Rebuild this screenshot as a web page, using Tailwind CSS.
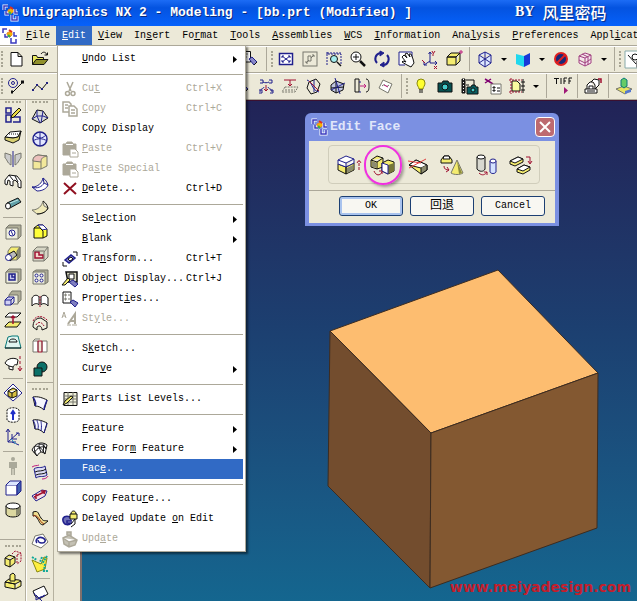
<!DOCTYPE html>
<html lang="en">

<head>
    <meta charset="utf-8" />
    <meta name="viewport" content="width=device-width, initial-scale=1" />
    <title>Unigraphics NX 2 - Modeling</title>
    <script src="https://cdn.jsdelivr.net/npm/@tailwindcss/browser@4"></script>
</head>

<body class="h-screen overflow-hidden flex flex-col bg-[#ece9d8] text-black text-[10px] leading-5 font-['Liberation_Mono','Noto_Sans_CJK_SC',monospace]">
    <header class="relative h-[26px] shrink-0 flex items-center bg-linear-to-b from-[#1c6cf5] via-[#0453e0] via-30% to-[#0661fb] text-white whitespace-nowrap">
        <span data-icon="logo" class="w-[22px] flex justify-center"></span>
        <h1 class="text-[13px] font-bold text-shadow-[1px_1px_0_#0a2a80]">Unigraphics NX 2 - Modeling - [bb.prt (Modified) ]</h1>
        <div class="absolute left-[515px] top-0 flex items-center gap-3 leading-6 font-bold text-shadow-[1px_1px_1px_#0a2a80]">
            <span class="text-[14px] font-['Liberation_Serif',serif]">BY</span>
            <span class="text-base leading-5 -ml-1 font-['Noto_Sans_CJK_SC',sans-serif] font-medium">风里密码</span>
        </div>
    </header>

    <nav class="h-[19px] shrink-0 flex items-stretch whitespace-nowrap leading-[19px]">
        <span data-icon="logo" class="w-5 flex items-center justify-center bg-white"></span>
        <button class="px-[6px]"><u>F</u>ile</button>
        <div class="relative z-10">
            <button class="h-full px-[6px] bg-[#316ac5] text-white"><u>E</u>dit</button>
            <div id="edit-menu" class="absolute left-px top-full w-[189px] bg-white border border-[#aca899] px-[2px] pt-[3px] pb-[2px] shadow-[2px_2px_2px_#00000080] leading-5"></div>
        </div>
        <button class="px-[6px]"><u>V</u>iew</button>
        <button class="px-[6px]">In<u>s</u>ert</button>
        <button class="px-[6px]">Fo<u>r</u>mat</button>
        <button class="px-[6px]"><u>T</u>ools</button>
        <button class="px-[6px]"><u>A</u>ssemblies</button>
        <button class="px-[6px]"><u>W</u>CS</button>
        <button class="px-[6px]"><u>I</u>nformation</button>
        <button class="px-[6px]">Ana<u>l</u>ysis</button>
        <button class="px-[6px]"><u>P</u>references</button>
        <button class="px-[6px]">Appl<u>i</u>cation</button>
    </nav>

    <div id="bar1" class="h-[27px] shrink-0 flex items-center overflow-hidden border-t border-[#aca899] shadow-[inset_0_1px_0_#fff]"></div>
    <div id="bar2" class="h-[28px] shrink-0 flex items-center overflow-hidden border-y border-[#aca899] shadow-[inset_0_1px_0_#fff]"></div>

    <main class="flex-1 flex min-h-0">
        <div id="col1" class="w-[26px] shrink-0 flex flex-col items-center overflow-hidden border-r border-[#b5b19f]"></div>
        <div id="col2" class="w-[28px] shrink-0 flex flex-col items-center overflow-hidden border-x border-l-white border-r-[#b5b19f]"></div>
        <div class="w-7 shrink-0 border-r-2 border-[#80706c]"></div>

        <section class="relative flex-1 overflow-hidden bg-linear-to-b from-[#212357] via-[#1c3f70] via-45% to-[#14668f] border-t border-[#3c1030]">
            <svg class="absolute left-[245px] top-[168px] w-[272px] h-[320px]" viewBox="327 269 272 320" stroke="#3d2c20" stroke-linejoin="round">
                <path fill="#fdbd70" d="M330 331 498 270 598 373 431 433Z" />
                <path fill="#734d2e" d="M330 331 431 433 430 588 328 486Z" />
                <path fill="#835831" d="M431 433 598 373 597 528 430 588Z" />
            </svg>

            <div class="absolute left-[223px] top-[12px] w-[254px] rounded-t-md bg-[#7b90e2] px-1 pb-[3px]">
                <div class="h-7 flex items-center rounded-t-md text-[#e0e6fa]">
                    <span data-icon="logo" class="w-[21px] flex justify-center"></span>
                    <h2 class="flex-1 text-[13px] font-bold">Edit Face</h2>
                    <button aria-label="Close" class="size-5 rounded-sm border border-white bg-[#bd6a70] flex items-center justify-center">
                        <svg class="size-3" viewBox="0 0 12 12" stroke="#fff" stroke-width="2"><path d="M1 1 11 11M11 1 1 11" /></svg>
                    </button>
                </div>
                <div class="bg-[#ece9d8] pt-1 pb-[7px]">
                    <div class="pl-1">
                        <div id="face-tools" class="mx-auto w-[212px] h-[39px] flex items-center justify-between pl-1 pr-[2px] rounded border border-[#d0cdbb]"></div>
                    </div>
                    <hr class="mt-[6px] mb-[5px] border-[#aca899]" />
                    <div class="flex justify-center gap-[7px] pl-[24px] pr-[4px]">
                        <button class="flex-1 max-w-16 h-5 leading-4 bg-[#f8f7f2] border border-[#1c3f73] rounded-[3px] shadow-[inset_0_0_0_2px_#a9c3ee]">OK</button>
                        <button class="flex-1 max-w-16 h-5 leading-4 text-xs bg-[#f8f7f2] border border-[#1c3f73] rounded-[3px]">回退</button>
                        <button class="flex-1 max-w-16 h-5 leading-4 bg-[#f8f7f2] border border-[#1c3f73] rounded-[3px]">Cancel</button>
                    </div>
                </div>
            </div>

            <p class="absolute right-[6px] bottom-1 text-[14px] leading-5 font-bold text-[#c31e2c] font-['DejaVu_Sans',sans-serif]">www.meiyadesign.com</p>
        </section>
    </main>

    <script>
        const N = 'stroke="#20208c"', R = 'stroke="#a01030"', G = 'stroke="#77776c"', M = 'stroke="#c02080"', T = 'stroke="#087878"';
        const Y = 'fill="#f4ec70"', W = 'fill="#fff"', S = 'fill="#8c8c70"';

        // every drawing sits in a 20 x 20 box, black outline unless it says otherwise
        const icons = {
            logo: `<path fill="#f4b400" stroke="#e8862a" d="M7 7 11 5 13 8 10 11 7 10Z"/><path stroke="#fff" stroke-width="3" d="M3 7V3H7M5 8V11H8M11 12v5h5v-4M14 6v4h3"/><path stroke="#3a3ac0" stroke-width="1.500" d="M3 7V3H7M5 8V11H8M11 12v5h5v-4M14 6v4h3"/><path stroke="#e03020" stroke-width="2" d="M9 4 12 6"/><path stroke="#30b050" stroke-width="2" d="M8 9 10 11"/>`,
            new: `<path ${W} d="M5 3.500h7l4 4v9.500H5ZM12 3.500V7.500h4"/>`,
            open: `<path fill="#e8e860" d="M2.500 15.500V6.500h4l1 2h6v2"/><path fill="#90902c" d="M2.500 15.500 6 10.500h12l-4 5Z"/><path d="M11 5c2-3 5-2 6 1M14.500 6H17.500V3.500"/>`,
            find: `<path ${W} d="M0 2.500H9.500V13H0"/><path ${G} d="M2 5h5M2 8h4"/><path fill="#8888c8" ${N} d="m8 10 3-2 5 5-3 3Z"/><path d="m13 16 3-3"/>`,
            fit: `<rect x="3.500" y="4.500" width="13" height="11" ${W} ${N} stroke-width="1.500"/><path ${N} d="m6 7 8 6m0-6-8 6M6 9V7h2m4 0h2v2m0 2v2h-2m-4 0H6v-2"/>`,
            fitGray: `<rect x="3" y="3" width="14" height="14" ${G}/><path ${G} d="m6 14 3-3m2-2 3-3m-2 0h2v2M6 12v2h2M8 7h3v5H8Z"/>`,
            fitSel: `<path ${N} d="M3 16V5h14v11M3 5V3m0 1h14V3" stroke-dasharray="2 1"/><circle cx="10" cy="10" r="3.500" fill="#a5eeee"/><path stroke-width="1.500" d="m13 13 4 4"/>`,
            zoom: `<circle cx="8" cy="8" r="5" ${W}/><path d="M5 8h6M8 5v6"/><path stroke-width="2.500" d="m12 12 5 5"/>`,
            rotate: `<path ${N} stroke-width="2" d="M5 14A6 6 0 0 1 8 4M15 6A6 6 0 0 1 12 16"/><path fill="#20208c" ${N} d="M8 2v5l4-3ZM12 13v5l-4-2Z"/>`,
            pan: `<path ${W} ${N} d="M16 9V3H3v13h6"/><path ${W} d="m6 8 2-2 3 3-2-4 2-1 3 4-1-3 2 0 2 5 1 4-3 4-4-2-5-3 1-1 3 1Z"/>`,
            axes: `<path ${N} d="M10 3v11h7M10 12l-6 4M8.500 5 10 3l1.500 2M15 12l2 2-2 2M4 13v3h3"/><path ${R} d="m12 2 1 2m2-2-2 3v2M2 11l3 3M14 17l3 3m0-3-3 3"/>`,
            plainBox: `<path ${Y} d="M3 8h9v8H3ZM3 8l4-4h9l-4 4ZM16 4v8l-4 4"/><path ${M} d="M17 1v4M15 3h4"/>`,
            hexWire: `<path ${N} fill="#dde8ff" d="m10 3 6 3v8l-6 4-6-4V6ZM4 6l6 4 6-4M10 3v15M4 14l6-4 6 4"/>`,
            shade: `<path fill="#20d8ee" stroke="none" d="m3 5 8 2v11l-8-3Z"/><path fill="#1838d8" stroke="none" d="m11 7 6-3v11l-6 3Z"/>`,
            forbid: `<circle cx="10" cy="10" r="6" fill="#182878" stroke="#e02020" stroke-width="2"/><path stroke="#e02020" stroke-width="2" d="m6 14 8-8"/>`,
            hexPink: `<path stroke="#a04080" fill="#f8e4f0" d="m10 4 6 2v8l-6 3-6-3V7ZM4 7l6 2 6-3M10 9v8M7 5l6 3v8M4 11l6 3 6-4"/>`,
            snap: `<path ${W} stroke="#8aa" d="M1 2h22v17H1Z"/><circle cx="11" cy="8" r="3"/><path d="m4 6 8 9"/><rect x="13" y="12" width="6" height="6" ${W}/>`,
            circleLine: `<circle cx="7" cy="7" r="4.500" ${N}/><circle cx="7" cy="7" r="1.500" ${N}/><path d="m6 17 10-10"/><path stroke-width="3" d="M5 16h2M15 6h3"/>`,
            zigzag: `<path d="m3 14 4-5 5 4 5-6"/><path stroke="#222280" stroke-width="2" d="M2 14h2M6 9h2M11 13h2M16 7h2"/>`,
            swirl: `<path ${N} d="M4 4h3v3H4M13 4h3v3h-3M7 6c2 1 4 1 6 0M4 16c0-4 3-2 4-5M16 16c0-4-3-2-4-5M3 14h3v3H3M14 14h3v3h-3"/><path ${R} d="M10 9v6m-2-2 2 2 2-2"/>`,
            project: `<path ${R} d="M4 4h12M10 4v6M8 8l2 2 2-2"/><path ${G} stroke-dasharray="2 1" d="m5 11-3 5h13l3-5ZM5 14h10"/>`,
            cutCurve: `<path d="M5 6 12 3l4 5-3 8-6 2-4-6Z"/><path ${N} d="M3 4c6 2 4 10 12 12M10 4v12"/><path ${R} d="m5 5 10 10"/>`,
            section: `<path fill="#bfc4e0" d="m3 9 5-4 8 3-1 6-7 3-5-3ZM8 5v12M3 12l13-1"/><path ${N} d="M7 2 12 18M3 14 17 7"/>`,
            bracket: `<path d="M3 3h4v13H3ZM14 3c3 0 3 4 3 6.500s0 6.500-3 6.500"/><path ${M} d="M8 10h6m-2-2 2 2-2 2"/><path ${N} d="M7 6h2M7 16h2"/>`,
            tilted: `<path ${G} ${W} d="m7 4 9 4-4 9-9-5Z"/><path ${G} d="M6 10c4-4 3 3 7-1"/><path ${M} d="m8 9 4 2"/>`,
            bulb: `<path fill="#ffff30" stroke="#88880c" d="M8 13c0-2-2-3-2-6a4 4 0 0 1 8 0c0 3-2 4-2 6Z"/><path d="M8 14h4M8 16h4"/>`,
            camera: `<path fill="#064f50" d="M3 7h4l1-2h5l1 2h3v9H3Z"/><circle cx="10" cy="11" r="3" fill="#44cccc"/>`,
            film: `<path fill="#222" d="M3 3h3v14H3Z"/><path stroke="#fff" stroke-dasharray="1 2" d="M4.500 3v14"/><path d="M7 4h8v5M7 9h3"/><path fill="#075c60" d="M8 11h4l1-2h3l1 2h2v7H8Z"/><circle cx="14" cy="14" r="2" fill="#4cc"/>`,
            cutList: `<path stroke="#800070" stroke-width="1.500" d="m2 3 8 5M2 7l6-4"/><path ${W} ${G} d="M8 8h10v10H8Z"/><path d="M10 11h2v1h-2ZM10 14h2v1h-2ZM14 12h3M14 15h3"/>`,
            sheet: `<path fill="#fafaa0" d="M5 5h5l3 3v7H5Z"/><path ${R} d="M2 4h13M2 16h13M4 2v16" stroke-dasharray="2 1"/><path d="M16 3v14M14 6h4M14 10h4M14 14h4"/>`,
            tiff: `<path d="M2 2.500h5M4.500 2v6M9 2v6M12 8V2h3M12 5h2M17 8V2h3M17 5h2"/><path fill="#a01878" stroke="none" d="M12 11v7l4-3.500Z"/>`,
            stamp: `<path ${W} d="M2 13h12v4H2ZM4 13V9l3-3h3l2 3v4M6 13v-3h4v3M12 13l4-4V4l-5-1-3 3"/><path ${R} stroke-width="1.500" d="M15 3h3v4"/><path d="M4 15h8"/>`,
            layers: `<path fill="#e8e460" ${G} d="m2 13 8-3 8 3-7 5Z"/><path fill="#66cc66" ${T} d="M7 4 10 2l3 2v6l-3 2-3-2Z"/><path fill="#5578cc" stroke="none" d="m11 15 6-2v3l-6 2Z"/>`,

            sketch: `<path ${N} stroke-width="1.500" d="M3 3h5v5H3ZM3 10h5v7H3ZM10 12h7v5h-7"/><path fill="#e8d840" d="m9 10 7-7 2 2-7 7-3 1Z"/>`,
            slab: `<path ${W} d="m2 10 5-5 11-1-3 6-5 1Z"/><path fill="#d8cf70" d="m2 10v3l8 3 6-3 2-9-3 6-5 1Z"/><path stroke-dasharray="1 1" d="M6 7h10"/>`,
            mirror: `<path fill="#ccc" ${G} d="M2 4 8 6v10c-4-2-4-6-6-7ZM18 4l-6 2v10c4-2 4-6 6-7Z"/><path ${N} d="M10 2v16"/>`,
            sweep: `<path ${W} d="M2 9 6 4l8 1 4 5v7l-3-1v-4l-3-3-2 1v5l-3-1v-4l-2-1-1 5-2-1Z"/><path d="m6 4 4 5M12 5l3 6"/>`,
            tube: `<path fill="#60a0a8" d="m4 10 11-5 3 4-11 6Z"/><ellipse cx="5" cy="13" rx="2.500" ry="3" ${W}/><path stroke="#bfe6e6" d="m7 10 8-3"/>`,
            hole: `<path fill="#b0ae98" ${G} d="m3 6 3-3h12v11l-3 3Z"/><path fill="#eeeedd" ${G} d="M3 6h12v11H3Z"/><circle cx="9" cy="11" r="3" ${W} ${N}/><path ${N} d="m8 9 2 4"/>`,
            boss: `<path ${Y} ${G} d="M5 7 8 3h9v10l-3 3H5Z"/><path ${S} ${G} d="m14 7 3-4v10l-3 3Z"/><path fill="#bbb" d="m4 11 7-4 3 4-7 6Z"/><circle cx="5.500" cy="13.500" r="3" ${W} ${N}/>`,
            pocket: `<path fill="#b0ae98" ${G} d="m3 6 3-3h12v11l-3 3H3Z"/><path fill="#eeeedd" ${G} d="M3 6h12v11H3Z"/><path fill="#c8c8ee" ${N} stroke-width="1.500" d="M6 8h6v6H6ZM9 8v3h3"/>`,
            pad: `<path fill="#b0ae98" ${G} d="M6 7 9 3h9v9l-4 4Z"/><path fill="#eeeedd" ${G} d="M6 7h9v9H6Z"/><path fill="#d0d0f4" ${N} d="M2 12h6v5H2ZM2 12l3-3h6l-3 3M11 9v5l-3 3"/>`,
            offset: `<path ${W} d="m2 7 4-4h12l-4 4Z"/><path ${Y} d="m2 16 4-4h12l-4 5H2Z"/><path ${R} stroke-width="1.500" d="M10 14V6M8 8l2-2 2 2"/>`,
            relief: `<path fill="#dff4f0" ${T} d="M2 16 5 5l4-1h6l3 12Z"/><path d="M6 10c0-4 8-4 8 0ZM2 16h16"/>`,
            trim: `<path ${W} d="M2 9c2-5 10-6 13-3l-1 5c-2-1-3 0-4 2l-4-1c-1-1-3-1-4-3ZM6 12v3l4 1v-3"/><path ${R} d="M17 2v3m0 2v3m0 2v4m-2-2 2 3 2-3"/>`,
            datumBox: `<path ${W} ${N} d="m10 1 9 9-9 8-9-8Z"/><path fill="#d8c040" d="m5 8 5-3 4 2v6l-5 2-4-2ZM5 8l4 2 5-3M9 10v5"/>`,
            datumAxis: `<path ${W} stroke-dasharray="2 1" d="M4 5c2-3 10-3 12 0v10c-2 3-10 3-12 0Z"/><path stroke="#2030c8" stroke-width="2" d="M10 15V7M8 9l2-3 2 3"/>`,
            csys: `<path ${N} d="M5 3v12h8M3 5l2-3 2 3M5 15 15 6M9 15l7 3M13 6h3v3M9 7v5h5"/><path stroke="#38a0c0" d="m8 12 5 5"/>`,
            man: `<g fill="#aaa99a" stroke="none"><circle cx="10" cy="3" r="2"/><path d="M6 6h8v6h-2v7h-1.500v-6h-1v6H8v-7H6Z"/></g>`,
            block: `<path ${W} ${N} d="M3 7h11v10H3Z"/><path fill="#dce6ff" ${N} d="m3 7 4-4h11l-4 4"/><path fill="#4060b0" ${N} d="m14 7 4-4v10l-4 4Z"/>`,
            cylinder: `<path fill="#dcd8a0" d="M3 6v8c1 4 13 4 14 0V6"/><path ${S} stroke="none" d="M13 8v8l4-2V6Z"/><ellipse cx="10" cy="6" rx="7" ry="3" ${W}/>`,
            copyBox: `<path ${Y} d="m2 9 4-3 6 2v6l-5 4-5-2ZM2 9l5 2 5-3M7 11v7"/><path ${R} stroke-dasharray="2 1" d="m9 5 3-3 6 2v8l-4 3M14 6v9M14 6l4-2"/>`,
            boxUp: `<path ${Y} d="m2 11 4-3 10 1 2 1-6 3ZM2 11v5l10 2v-5ZM12 18l6-3v-5"/><path ${Y} d="M7 10V4l3-2 2 2v6Z"/>`,
            loft: `<path fill="#d8dadc" d="m2 13 5-9 6 1 5 7-8 5Z"/><path ${N} d="M7 4v6l3 7M13 5l-2 12M2 13l5-3h6l5 2"/>`,
            sphere: `<circle cx="10" cy="10" r="7" fill="#e4e8ff" ${N} stroke-width="1.500"/><path ${N} d="M4 6c4 4 8 4 12 0M3 12c4-3 10-3 14 0M10 3v14"/>`,
            blend: `<path fill="#f2e89a" ${G} d="M3 9c0-4 2-5 5-6l9 1v10l-6 3H3Z"/><path fill="#ecc0bc" ${G} d="M3 9c0-4 2-5 5-6l9 1c-4 1-6 2-6 6Z"/><path ${G} d="M11 10v7"/>`,
            sheetBlend: `<path fill="#fff" ${N} d="M13 3c-1 5-5 9-11 9l5 4c6 0 10-3 11-6l-4-2Z"/><path ${N} d="M13 3c3 2 4 4 5 7M2 12c5 2 10 0 12-4"/>`,
            softBlend: `<path fill="#f0eab8" ${G} d="M13 3c-1 5-5 9-11 9l5 4c6 0 10-3 11-6l-4-2Z"/><path d="M13 3c3 2 4 4 5 7-1 3-5 6-11 6"/>`,
            chamfer: `<path fill="#ffff38" d="M4 7 8 4h5l4 4v7l-4 2H4Z"/><path ${W} ${N} d="m8 4 5 0 4 4-5 1Z"/><path d="M4 7h6l3 3v7"/>`,
            shell: `<path fill="#d7d6c5" ${G} d="M3 7 7 3h11v10l-4 4H3Z"/><path fill="#f4d6cc" ${R} stroke-width="1.500" d="M5 8h4v3h4v3H5Z"/><path ${G} d="m14 17v-9l4-5M3 7h11"/>`,
            pattern: `<path fill="#b0ae98" ${G} d="m3 5 3-2h12v12l-3 2Z"/><path fill="#eeeedd" ${G} d="M3 5h12v12H3Z"/><g ${N} ${W}><circle cx="6.500" cy="8.500" r="1.500"/><circle cx="11.500" cy="8.500" r="1.500"/><circle cx="6.500" cy="13.500" r="1.500"/><circle cx="11.500" cy="13.500" r="1.500"/></g>`,
            sew: `<path ${W} d="M2 8c2-4 6-3 7-1v8c-1-2-5-2-7 1ZM18 8c-2-4-6-3-7-1v8c1-2 5-2 7 1Z"/><path ${R} d="M10 6v11" stroke-dasharray="2 1"/>`,
            patch: `<path fill="#eeeede" d="M3 14c0-5 2-9 8-9l6 4v6l-5 2c0-4-3-5-5-3v3Z"/><path ${R} stroke-dasharray="2 1" d="M3 8c3-6 10-6 15 0M6 12c2-4 6-3 8 1"/>`,
            splitBody: `<path ${W} ${G} d="M3 5h5v11H3ZM12 5h5v11h-5ZM3 5l2-2h5"/><path ${R} d="M8 5h4v11H8Z"/>`,
            unite: `<circle cx="12" cy="8" r="5" fill="#0b7068"/><path fill="#0b7068" d="M4 9h8v8H4Z"/>`,
            ruled: `<path fill="#f6f6ff" d="M3 4c5-1 10 1 14 3l-3 10c-3-3-6-4-9-4Z"/><path ${N} stroke-width="1.500" d="M5 13C7 9 4 6 3 4M14 17c0-4 2-6 3-10"/>`,
            curves: `<path fill="#f6f6ff" d="M3 4c5-1 10 1 14 3l-3 10c-3-3-6-4-9-4Z"/><path ${N} d="M5 13C6 9 4 6 3 4M8 13c1-5-1-7-1-9M11 15c1-6 0-8 0-10M14 17c1-4 3-7 3-10"/>`,
            mesh: `<path ${W} d="M2 11C5 4 12 2 17 6l-2 9c-4-4-6-1-8 2Z"/><path d="M5 7c5 0 7 3 10 8M9 5c4 0 6 2 7 5M4 14c3-5 8-8 12-5M7 17C4 12 4 9 5 7M11 13c-2-4-2-6-2-8M14 5l-1 9"/>`,
            sweptSurf: `<path fill="#dcdcf4" ${N} d="M4 7c4-3 7 0 11-3l2 9c-4 3-7 0-11 3Z"/><path ${M} d="M2 5c3-2 5-1 7-2M12 17c3 0 5-1 6-3"/><path d="M5 10c4-2 7 0 11-3M6 13c4-2 7 0 11-3"/>`,
            arrowSurf: `<path fill="#f6dfe4" ${N} d="m2 11 10-6 5 1-2 5-9 5Z"/><path ${R} stroke-width="1.500" d="m4 12 10-5M11 6l4 0-1 3M6 9v5"/>`,
            wave: `<path fill="#f0de90" d="M3 4c6-2 5 2 8 6s3 2 7 3l-5 4c-4-1-3-3-6-7S5 8 3 8Z"/><path stroke="#9c3010" d="M3 8c6-2 6 6 11 8"/>`,
            ringSurf: `<path ${W} ${G} d="m2 13 3-8 8-2 5 8-7 6Z"/><path ${N} stroke-width="1.500" d="M7 12c-3-3 2-7 6-5s2 5-1 5-4-2-4-3"/>`,
            trimSurf: `<path fill="#ffef40" stroke="#888810" d="m2 6 9 4 3-7 3 1-2 11-8 3-2-5Z"/><path stroke="#11a898" stroke-width="2" stroke-dasharray="2 1" d="m2 3 5 3M12 3l-2 5M17 2l-5 8M15 10l-1 7h4"/>`,
            quilt: `<path ${W} d="m3 7 11-5 4 8-9 5-4-3Z"/><path ${N} d="m6 11 7 7M8 15c4-5 6 0 6-4M4 9l2 3v4l9-5"/>`,

            scissors: `<g stroke="#aca899" stroke-width="1.500"><path d="m7 3 4 9M13 3 9 12"/><circle cx="7.500" cy="14.500" r="2"/><circle cx="13" cy="14.500" r="2"/></g>`,
            copy: `<g stroke="#aca899" stroke-width="1.500" fill="#fff"><path d="M3 3h6l2 2v8H3Z"/><path d="M9 7h5l3 3v7H9ZM11 11h4M11 14h4M5 6h3M5 9h3"/></g>`,
            paste: `<path fill="#aca899" stroke="#aca899" d="M3 5h3l1-2h5l1 2h3v11H3Z"/><path stroke="#fff" d="M6 5.500h7"/><path stroke="#aca899" ${W} d="M10 10h5l3 3v5h-8Z"/><path stroke="#aca899" d="M12 14h4"/>`,
            cross: `<path stroke="#901020" stroke-width="2" d="m4 4 12 11M16 4 4 15"/>`,
            transform: `<path d="M3 13v4h4M13 3h4v4"/><path fill="#8888c8" ${N} stroke-width="1.500" d="m5 11 6-5 4 3-6 5Z"/><path ${W} d="m8 10 3-2 2 2-3 2Z"/>`,
            objDisplay: `<path d="M6 3h11v10H8Z" fill="#d8d8c0" stroke-width="1.500"/><path ${W} d="M9 5h5v5H9Z"/><path d="m2 16 6-7 2 2-5 5Z" ${Y}/><path fill="#8080c0" ${N} d="m9 13 4-2 5 4-3 3Z"/>`,
            props: `<path ${W} d="M3 3h8v11H3Z"/><path ${G} d="M5 5h1v2H5ZM5 9h1v2H5ZM8 6h2M8 10h2"/><path fill="#8080c0" ${N} d="m10 13 3-2 5 3-3 4Z"/>`,
            style: `<path stroke="#aca899" d="M2 9 4 3l2 6M3 7h2"/><path stroke="#aca899" stroke-width="2" d="m8 15 7-10v10M10 12h5"/><path stroke="#aca899" d="M7 16h4M12 16h5"/>`,
            parts: `<path fill="#f0f0dc" d="M4 3.500h13v13H4Z"/><path ${G} d="M4 7h13M4 10h13M4 13h13M8 3v13M13 3v13"/><path ${Y} d="m3 16 2-4 6-5 2 1-6 6Z"/>`,
            delayed: `<path fill="#6f70b8" ${N} stroke-width="1.500" d="M10 8c-4-2-8 0-7 4s6 5 8 2H7v-2h5"/><path d="m11 15 4-5v5l-4 3"/><path ${Y} d="M10 5h7v5h-7ZM11 5c0-4 5-4 5 0"/>`,
            update: `<path fill="#c4c1b4" stroke="#aca899" stroke-width="1.500" d="m3 9 6-3 8 5-2 5-6 2-5-3ZM3 9l6 4 8-2M9 13v5M7 6V3h4v4"/>`,

            faceMove: `<path ${Y} d="m1 9 8 3v7l-8-4ZM9 12l8-4v7l-8 4Z"/><path ${S} stroke="none" d="m10 13 6-3v5l-6 3Z"/><path ${W} ${N} d="m1 5 8-4 8 3-8 4ZM1 5v4l8 3V8M17 4v4l-8 4"/><path ${R} d="M22 15v-9m-2 2 2-3 2 3" stroke-dasharray="3 1"/>`,
            faceCopy: `<path ${Y} d="m0 5 6-4 6 2v9l-6 2-6-2ZM0 5l6 2 6-4M6 7v7"/><path ${S} stroke="none" d="M1 6v6l5 1V8Z"/><path ${Y} d="m11 8 6-3 6 2v9l-6 3-6-3Z"/><path fill="#777738" stroke="none" d="m17 10 6-2v8l-6 3Z"/><path ${W} ${N} d="m11 8 6 2v9l-6-3Z"/><path ${R} d="M3 16c2 5 6 5 8 1m-3-1h3v3"/>`,
            faceCut: `<path ${Y} d="m3 10 7-5 11 5v5l-6 4Z"/><path ${W} d="m3 10 7-5 11 5-6 3Z"/><path ${S} stroke="none" d="m15 13 6-3v5l-6 4Z"/><path d="M15 13v6l6-4v-5"/><path stroke="#e04040" d="M3 13 20 4M2 6l13 2"/>`,
            faceCone: `<path ${Y} d="M1 5 4 1h5l3 4v3H1Z"/><path ${W} d="M4 1h5l1 3H3Z"/><path ${Y} ${G} d="m11 18 6-13 6 13c-3 2-9 2-12 0Z"/><path fill="#8c8c40" stroke="none" d="m17 6 5 12-3 1Z"/><path ${R} d="M4 11c0 3 2 4 5 4M7 12l2 3-3 2"/>`,
            faceCyl: `<path fill="#d8d8d0" d="M2 2v12c2 3 7 3 8 0V2"/><ellipse cx="6" cy="2" rx="4" ry="2" ${W}/><path fill="#d4e2ff" ${N} d="M15 6v11c1 2 5 2 6 0V6"/><ellipse cx="18" cy="6" rx="3" ry="2" ${W} ${N}/><path ${R} d="M4 18c3 3 6 2 8-1m-3 0h3v3"/>`,
            faceSwap: `<path ${Y} d="m1 6 8-4 5 2v3l-8 4-5-2Z"/><path ${W} d="m1 6 8-4 5 2-8 4Z"/><path ${Y} d="m8 14 7-4 6 2v3l-7 4-6-2Z"/><path ${W} d="m8 14 7-4 6 2-7 4Z"/><path ${R} d="M17 2h4v6m-2-2 2 3 2-3"/>`
        };

        function draw(name) {
            const wide = name.startsWith('face');
            return `<svg class="${wide ? 'w-6 h-5' : 'size-5'} shrink-0 overflow-visible" viewBox="0 0 ${wide ? 24 : 20} 20" fill="none" stroke="#111">${icons[name]}</svg>`;
        }

        document.querySelectorAll('[data-icon]').forEach(el => el.innerHTML = draw(el.dataset.icon));

        // "|" separator, ":" grip, "v" drop-down arrow, "~" and "-" runs of unused space
        const across = {
            '|': '<span class="w-px h-6 mx-[3px] shrink-0 bg-[#aca899]"></span>',
            ':': '<span class="w-[2px] h-4 mx-px shrink-0 border-l-2 border-dotted border-[#a8a594]"></span>',
            'v': '<button aria-label="More" class="w-[14px] shrink-0 flex justify-center"><svg class="w-[6px] h-[3px]" viewBox="0 0 6 3"><path d="M0 0h6L3 3Z"/></svg></button>',
            '~': '<span class="w-[187px] shrink-0"></span>',
            '-': '<span class="w-[178px] shrink-0"></span>'
        };
        const down = {
            '|': '<span class="h-px w-5 my-[3px] shrink-0 bg-[#aca899]"></span>',
            '_': '<span class="h-px w-full mt-[18px] mb-1 shrink-0 bg-[#aca899]"></span>',
            '=': '<span class="h-px w-full mt-[2px] mb-1 shrink-0 bg-[#aca899]"></span>',
            ':': '<span class="h-[2px] w-4 my-px shrink-0 border-t-2 border-dotted border-[#a8a594]"></span>'
        };

        function fill(id, names, marks, cls) {
            document.getElementById(id).innerHTML = names.split(' ').map(n =>
                marks[n] || `<button aria-label="${n}" class="${cls}">${draw(n)}</button>`
            ).join('');
        }

        fill('bar1', ': new open ~ find | : fit fitGray fitSel zoom rotate pan axes plainBox | hexWire v shade v forbid hexPink v | : snap', across, 'w-6 shrink-0 flex justify-center');
        fill('bar2', ': circleLine zigzag - find swirl project cutCurve section bracket tilted | : bulb camera film cutList sheet v | tiff | stamp | layers', across, 'w-6 shrink-0 flex justify-center');
        fill('col1', ': sketch slab mirror sweep tube | hole boss pocket pad offset relief trim | datumBox datumAxis csys | man block cylinder _ : copyBox boxUp', down, 'h-[22px] shrink-0 flex items-center');
        fill('col2', ': loft sphere blend sheetBlend softBlend chamfer shell pattern sew patch splitBody unite = : ruled curves mesh sweptSurf arrowSurf wave ringSurf trimSurf | quilt', down, 'h-[23px] shrink-0 flex items-center');
        fill('face-tools', 'faceMove faceCopy faceCut faceCone faceCyl faceSwap', across, 'relative w-8 flex justify-center');

        document.querySelector('[aria-label="faceCopy"]').insertAdjacentHTML('beforeend',
            '<span class="absolute -left-[3px] -top-[10px] w-[38px] h-10 rounded-full border-2 border-[#f030e0] shadow-[2px_2px_3px_#00000055]"></span>');

        // label, icon, shortcut, state; & goes before the underlined letter
        const menu = [
            ['&Undo List', '', '', 'sub'], null,
            ['Cu&t', 'scissors', 'Ctrl+X', 'off'],
            ['&Copy', 'copy', 'Ctrl+C', 'off'],
            ['Cop&y Display', '', '', ''],
            ['&Paste', 'paste', 'Ctrl+V', 'off'],
            ['Pa&ste Special', 'paste', '', 'off'],
            ['&Delete...', 'cross', 'Ctrl+D', ''], null,
            ['Se&lection', '', '', 'sub'],
            ['&Blank', '', '', 'sub'],
            ['Tra&nsform...', 'transform', 'Ctrl+T', ''],
            ['Ob&ject Display...', 'objDisplay', 'Ctrl+J', ''],
            ['Propert&ies...', 'props', '', ''],
            ['St&yle...', 'style', '', 'off'], null,
            ['S&ketch...', '', '', ''],
            ['Cur&ve', '', '', 'sub'], null,
            ['&Parts List Levels...', 'parts', '', ''], null,
            ['&Feature', '', '', 'sub'],
            ['Free For&m Feature', '', '', 'sub'],
            ['Fac&e...', '', '', 'on'], null,
            ['Copy Featu&re...', '', '', ''],
            ['Delayed Update &on Edit', 'delayed', '', ''],
            ['Upd&ate', 'update', '', 'off']
        ];
        const tone = { off: 'text-[#aca899]', on: 'bg-[#316ac5] text-white' };

        document.getElementById('edit-menu').innerHTML = menu.map(item => {
            if (!item) return '<hr class="mt-[5px] mb-1 border-[#aca899]" />';
            const [label, icon, key, state] = item;
            return `<button ${state === 'off' ? 'disabled' : ''} class="relative w-full h-5 flex items-center text-left ${tone[state] || ''}">
                <span class="w-[22px] shrink-0">${icon ? draw(icon) : ''}</span>
                <span>${label.replace(/&(.)/, '<u>$1</u>')}</span>
                ${key ? `<span class="absolute left-[126px]">${key}</span>` : ''}
                ${state === 'sub' ? '<svg class="absolute right-[6px] w-1 h-[7px]" viewBox="0 0 4 7"><path d="M0 0v7l4-3.500Z"/></svg>' : ''}
            </button>`;
        }).join('');
    </script>
</body>

</html>
